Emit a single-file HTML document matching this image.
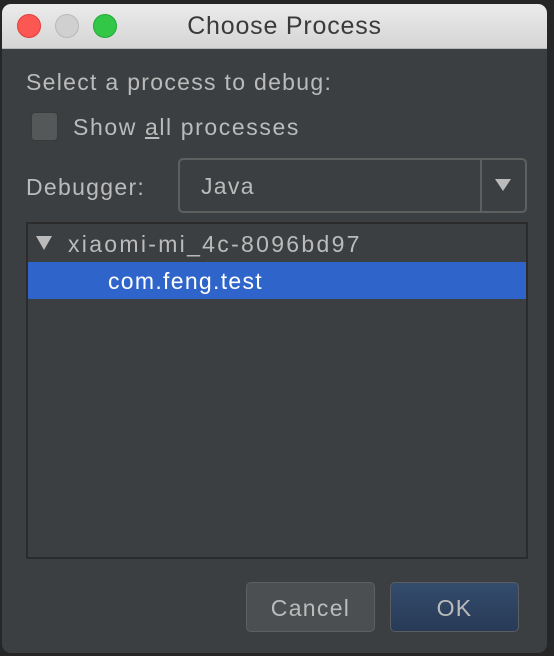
<!DOCTYPE html>
<html><head><style>
body{margin:0;width:554px;height:656px;background:#262626;position:relative;overflow:hidden;font-family:"Liberation Sans","DejaVu Sans",sans-serif;}
.win{position:absolute;left:2px;top:4px;width:545px;height:649px;background:#3c3f41;border-radius:9px;overflow:hidden;}
.title{position:absolute;left:0;top:0;width:100%;height:44px;background:linear-gradient(#ebebeb,#d5d5d5);border-bottom:1px solid #b5b5b5;}
.title span{position:absolute;left:0;right:0;top:8px;text-align:center;font-size:25px;letter-spacing:0.8px;color:#3a3a3a;padding-left:20px;}
.dot{position:absolute;top:10px;width:22px;height:22px;border-radius:50%;}
.t{position:absolute;color:#bbbbbb;font-size:23px;letter-spacing:1.3px;white-space:nowrap;}
</style></head><body>
<div class="win">
<div class="title">
<div class="dot" style="left:15px;background:#fc5753;border:1px solid #df3d39"></div>
<div class="dot" style="left:53px;background:#d0d0d0;border:1px solid #b8b8b8"></div>
<div class="dot" style="left:91px;background:#33c748;border:1px solid #20a834"></div>
<span>Choose Process</span>
</div>
<div class="t" style="left:24px;top:65px">Select a process to debug:</div>
<div style="position:absolute;left:29px;top:108px;width:25px;height:27px;background:#555859;border:1px solid #3a3a3a;border-radius:4px;"></div>
<div class="t" style="left:71px;top:110px;letter-spacing:1.6px">Show <u>a</u>ll processes</div>
<div class="t" style="left:24px;top:170px">Debugger:</div>
<div style="position:absolute;left:176px;top:154px;width:345px;height:51px;border:2px solid #5e6060;border-radius:5px;background:#3c3f41;">
<div class="t" style="left:21px;top:13px">Java</div>
<div style="position:absolute;left:300px;top:0;width:2px;height:51px;background:#5e6060"></div>
<div style="position:absolute;left:315px;top:19px;width:0;height:0;border-left:8px solid transparent;border-right:8px solid transparent;border-top:12px solid #bbbbbb"></div>
</div>
<div style="position:absolute;left:24px;top:218px;width:498px;height:333px;border:2px solid #2b2b2b;background:#3c3f41;">
<div style="position:absolute;left:8px;top:12px;width:0;height:0;border-left:8px solid transparent;border-right:8px solid transparent;border-top:14px solid #bbbbbb"></div>
<div class="t" style="left:40px;top:7px;letter-spacing:2.3px">xiaomi-mi_4c-8096bd97</div>
<div style="position:absolute;left:0;top:38px;width:498px;height:37px;background:#2f65ca;">
<div class="t" style="left:80px;top:6px;color:#fff">com.feng.test</div>
</div>
</div>
<div style="position:absolute;left:244px;top:578px;width:127px;height:48px;border:1px solid #5e6060;border-radius:5px;background:#4b4f51;"><div class="t" style="left:0;right:0;top:12px;text-align:center">Cancel</div></div>
<div style="position:absolute;left:388px;top:578px;width:127px;height:48px;border:1px solid #5a5e60;border-radius:5px;background:linear-gradient(#344c6d,#283a57);"><div class="t" style="left:0;right:0;top:12px;text-align:center">OK</div></div>
</div>
</body></html>
